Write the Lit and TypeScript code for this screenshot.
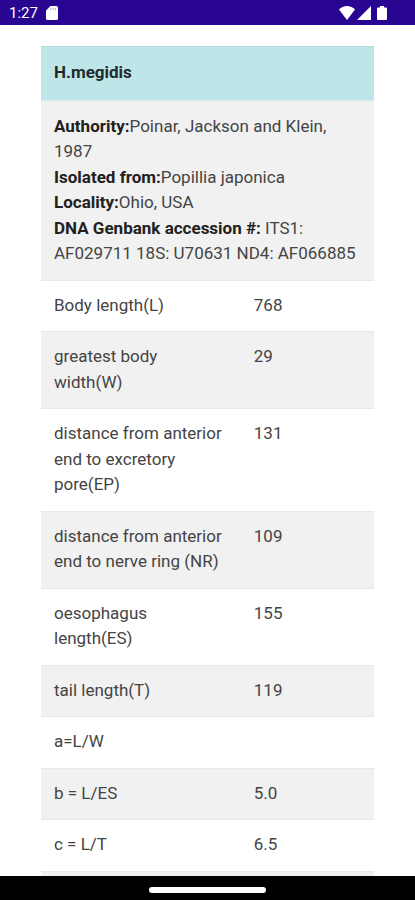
import { LitElement, html, css, nothing } from "lit";
import { customElement } from "lit/decorators.js";

interface Measurement {
  label: string;
  value?: string;
}

const MEASUREMENTS: Measurement[] = [
  { label: "Body length(L)", value: "768" },
  { label: "greatest body width(W)", value: "29" },
  { label: "distance from anterior end to excretory pore(EP)", value: "131" },
  { label: "distance from anterior end to nerve ring (NR)", value: "109" },
  { label: "oesophagus length(ES)", value: "155" },
  { label: "tail length(T)", value: "119" },
  { label: "a=L/W" },
  { label: "b = L/ES", value: "5.0" },
  { label: "c = L/T", value: "6.5" },
];

@customElement("status-bar")
class StatusBar extends LitElement {
  static styles = css`
    :host {
      display: flex;
      flex: none;
      align-items: center;
      height: 25px;
      box-sizing: border-box;
      padding: 1px 28px 0 9px;
      background: #290691;
      color: #fff;
      font-size: 15px;
      line-height: 24px;
    }
    .card {
      margin-left: 8px;
    }
    .signals {
      display: flex;
      gap: 2px;
      margin-left: auto;
    }
    .battery {
      margin-left: 4px;
    }
    svg {
      display: block;
      fill: currentColor;
    }
  `;

  render() {
    return html`
      <span>1:27</span>
      <svg class="card" width="12" height="14" viewBox="0 0 12 14" aria-hidden="true">
        <path d="M4.5 0H10.5Q12 0 12 1.5V12.5Q12 14 10.5 14H1.5Q0 14 0 12.5V4.5Z" />
        <path d="M5 2V4M7.2 2V4M9.4 2V4" stroke="#b9aee0" stroke-width="1" />
      </svg>
      <div class="signals">
        <svg width="16" height="14" viewBox="0 0 16 14" aria-hidden="true">
          <path d="M8 14L0 3.4C2 1.3 5 0 8 0S14 1.3 16 3.4Z" />
        </svg>
        <svg width="14" height="14" viewBox="0 0 14 14" aria-hidden="true">
          <path d="M14 0V14H0Z" />
        </svg>
        <svg class="battery" width="10" height="14" viewBox="0 0 10 14" aria-hidden="true">
          <path d="M3 0H7V1.5H9Q10 1.5 10 2.5V13Q10 14 9 14H1Q0 14 0 13V2.5Q0 1.5 1 1.5H3Z" />
        </svg>
      </div>
    `;
  }
}

@customElement("species-table")
class SpeciesTable extends LitElement {
  static styles = css`
    :host {
      display: block;
    }
    table {
      width: 100%;
      table-layout: fixed;
      border-collapse: collapse;
      font-size: 17px;
      line-height: 1.5;
    }
    .label-col {
      width: 60%;
    }
    th,
    td {
      padding: 13px;
      text-align: left;
      vertical-align: top;
      font-weight: 400;
      box-shadow: inset 0 1px #e6e8ea;
    }
    tbody tr:nth-child(odd) {
      background: #f1f1f1;
    }
    thead th {
      padding-block: 14px;
      background: #bee5e8;
      font-weight: 700;
      box-shadow: inset 0 1px #b2dade;
      color: #22292c;
    }
    .summary {
      padding-top: 14px;
    }
    dl,
    dd {
      margin: 0;
    }
    dt,
    dd {
      display: inline;
    }
    dt {
      font-weight: 700;
      color: #212121;
    }
  `;

  render() {
    return html`
      <table>
        <colgroup>
          <col class="label-col" />
          <col />
        </colgroup>
        <thead>
          <tr>
            <th colspan="2" scope="col">H.megidis</th>
          </tr>
        </thead>
        <tbody>
          <tr>
            <td class="summary" colspan="2">
              <dl>
                <div><dt>Authority:</dt><dd>Poinar, Jackson and Klein, 1987</dd></div>
                <div><dt>Isolated from:</dt><dd>Popillia japonica</dd></div>
                <div><dt>Locality:</dt><dd>Ohio, USA</dd></div>
                <div><dt>DNA Genbank accession #:</dt> <dd>ITS1: AF029711 18S: U70631 ND4: AF066885</dd></div>
              </dl>
            </td>
          </tr>
          ${MEASUREMENTS.map(
            (m) => html`
              <tr>
                <th scope="row">${m.label}</th>
                <td>${m.value ?? nothing}</td>
              </tr>
            `
          )}
          <tr>
            <td></td>
            <td></td>
          </tr>
        </tbody>
      </table>
    `;
  }
}

@customElement("app-root")
class AppRoot extends LitElement {
  static styles = css`
    :host {
      display: flex;
      flex-direction: column;
      height: 100vh;
      background: #fff;
      color: #444;
      font-family: Roboto, "Noto Sans", sans-serif;
    }
    main {
      flex: 1;
      min-height: 0;
      overflow: hidden;
      padding: 21px 41px 0;
    }
    footer {
      display: flex;
      flex: none;
      justify-content: center;
      align-items: center;
      height: 24px;
      padding-top: 4px;
      box-sizing: border-box;
      background: #000;
    }
    .handle {
      width: 28%;
      height: 6px;
      border-radius: 3px;
      background: #fff;
    }
  `;

  render() {
    return html`
      <status-bar></status-bar>
      <main><species-table></species-table></main>
      <footer><div class="handle"></div></footer>
    `;
  }
}
